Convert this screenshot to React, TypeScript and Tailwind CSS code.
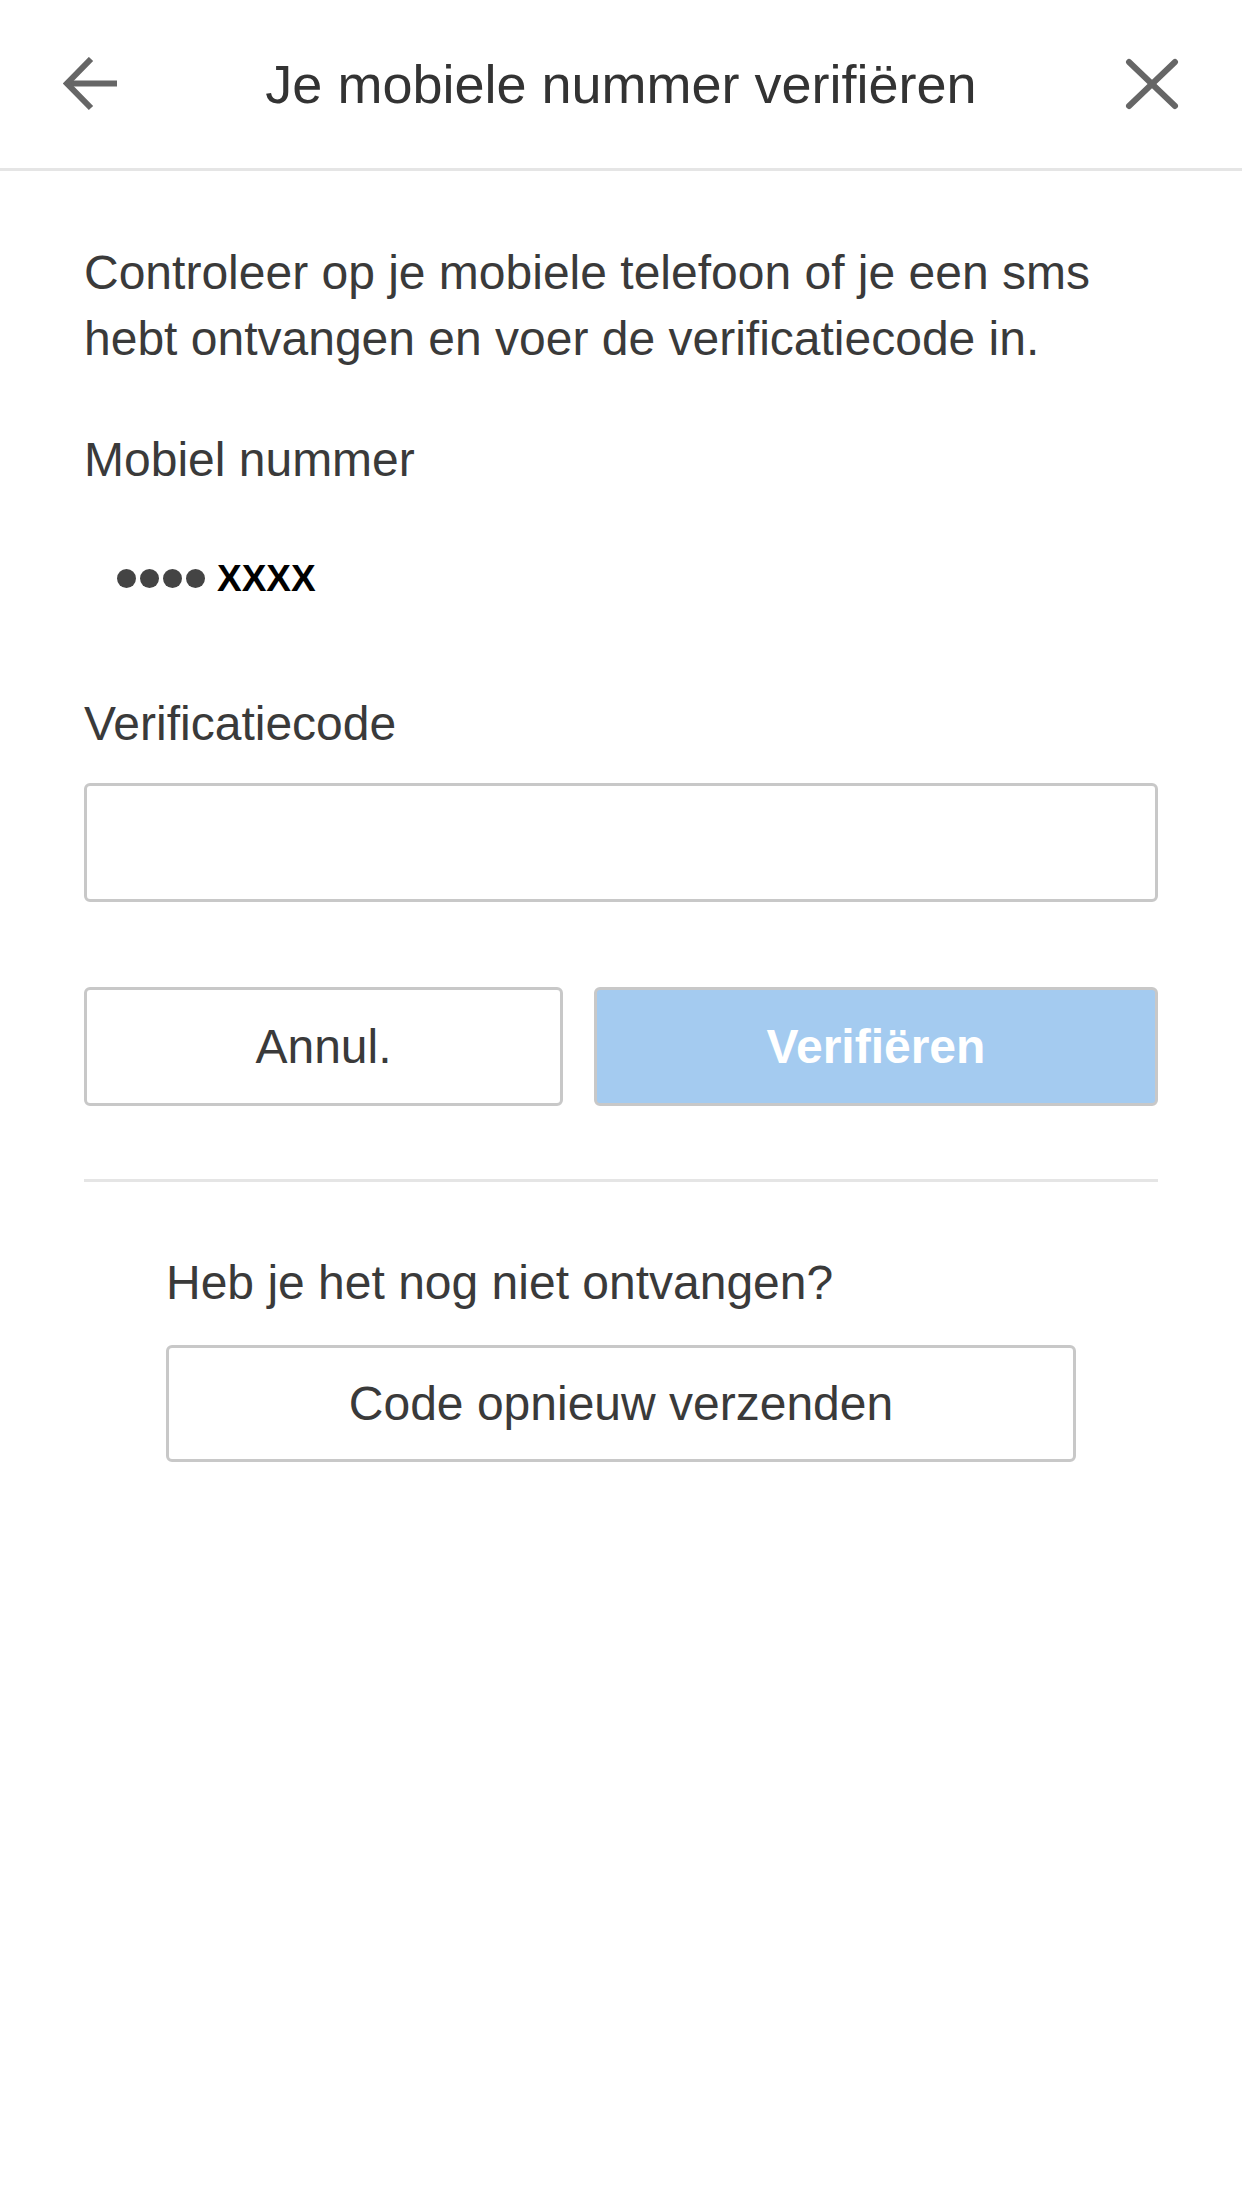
import React from "react";

export default function App() {
  return (
    <div className="w-[1242px] min-h-[2208px] bg-white text-[#3a3a3a] font-['Liberation_Sans',Arial,sans-serif]">
      <header className="h-[171px] border-b-[3px] border-[#e5e5e5] grid grid-cols-[1fr_auto_1fr] items-center">
        <div className="pl-[63px] flex items-center">
          <svg width="54" height="54" viewBox="0 0 54 54" fill="none" stroke="#666" strokeWidth="6">
            <path d="M5 26.5 H54" />
            <path d="M28 2 L4 26.5 L28 51" />
          </svg>
        </div>
        <h1 className="text-[54px] leading-[62px] text-[#333] font-normal">Je mobiele nummer verifiëren</h1>
        <div className="pr-[63px] flex items-center justify-end">
          <svg width="54" height="52" viewBox="0 0 54 52" fill="none" stroke="#666" strokeWidth="6" strokeLinecap="round">
            <path d="M4 4 L50 48" />
            <path d="M50 4 L4 48" />
          </svg>
        </div>
      </header>

      <main className="px-[84px]">
        <p className="mt-[69px] text-[48px] leading-[66px]">
          Controleer op je mobiele telefoon of je een sms hebt ontvangen en voer de verificatiecode in.
        </p>

        <div className="mt-[55px] text-[48px] leading-[66px]">Mobiel nummer</div>

        <div className="mt-[52px] h-[66px] flex items-center pl-[33px]">
          <div className="flex items-center gap-[4px]">
            <span className="w-[19px] h-[19px] rounded-full bg-[#444]" />
            <span className="w-[19px] h-[19px] rounded-full bg-[#444]" />
            <span className="w-[19px] h-[19px] rounded-full bg-[#444]" />
            <span className="w-[19px] h-[19px] rounded-full bg-[#444]" />
          </div>
          <span className="ml-[12px] text-[37px] font-bold text-black leading-none">XXXX</span>
        </div>

        <div className="mt-[80px] text-[48px] leading-[66px]">Verificatiecode</div>

        <input
          type="text"
          className="mt-[26px] block w-full h-[119px] border-[3px] border-[#c8c8c8] rounded-[6px] bg-white px-4 text-[48px] outline-none"
        />

        <div className="mt-[85px] flex gap-[31px]">
          <button className="w-[479px] h-[119px] border-[3px] border-[#c8c8c8] rounded-[6px] bg-white text-[48px] text-[#3a3a3a]">
            Annul.
          </button>
          <button className="flex-1 h-[119px] border-[3px] border-[#c8c8c8] rounded-[6px] bg-[#a4cbf0] text-[48px] font-bold text-white">
            Verifiëren
          </button>
        </div>

        <div className="mt-[73px] h-[3px] bg-[#e5e5e5]" />

        <div className="px-[82px]">
          <div className="mt-[68px] text-[48px] leading-[66px]">Heb je het nog niet ontvangen?</div>
          <button className="mt-[29px] w-full h-[117px] border-[3px] border-[#c8c8c8] rounded-[6px] bg-white text-[48px] text-[#3a3a3a]">
            Code opnieuw verzenden
          </button>
        </div>
      </main>
    </div>
  );
}
